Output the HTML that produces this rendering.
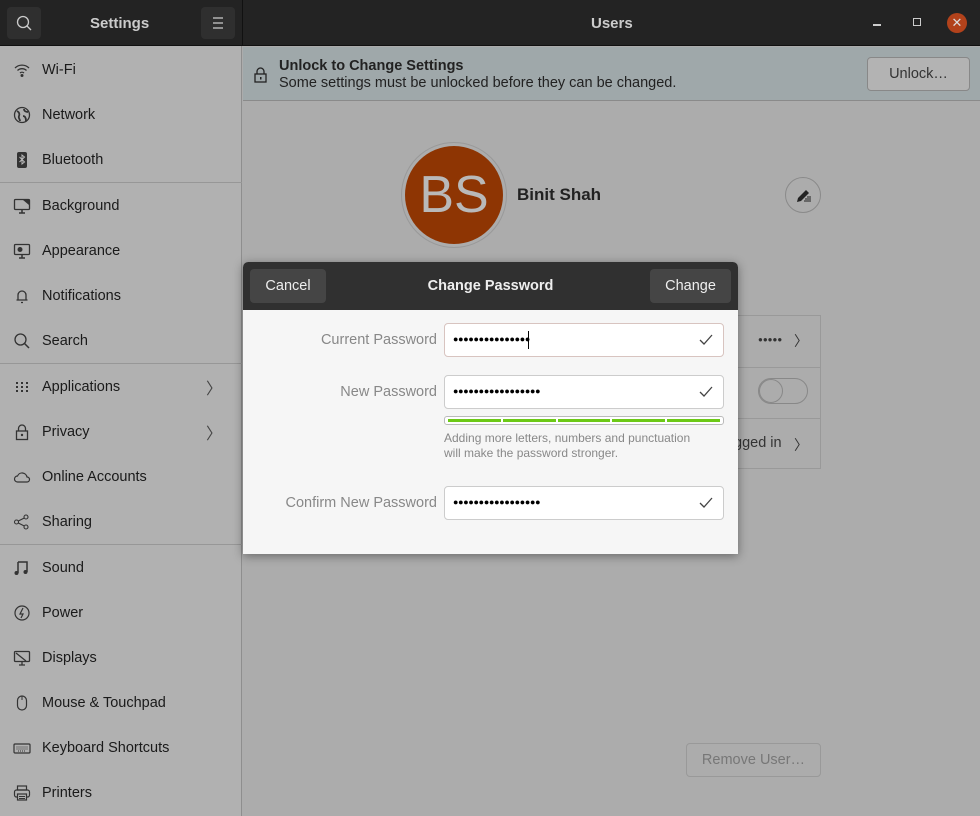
<!DOCTYPE html>
<html><head><style>
*{box-sizing:border-box;margin:0;padding:0}
body{width:980px;height:816px;overflow:hidden;font-family:"Liberation Sans",sans-serif;background:#acacac;position:relative;font-size:14px;color:#1a1a1a}
.hdr{position:absolute;left:0;top:0;width:980px;height:46px;background:#232323;border-bottom:1px solid #111}
.hbtn{position:absolute;top:7px;width:34px;height:32px;background:#2f2f2f;border-radius:4px}
.side{position:absolute;left:0;top:46px;width:242px;height:770px;background:#b1b1b1;border-right:1px solid #8e8e8e}
.it{position:absolute;left:0;width:242px;height:45px;display:flex;align-items:center}
.it svg{position:absolute;left:13px}
.it span{position:absolute;left:42px;font-size:14.5px;top:15px}
.sep{position:absolute;left:0;width:242px;height:1px;background:#979797}
.chev{position:absolute;right:20px;font-size:16px;color:#444}
.banner{position:absolute;left:243px;top:47px;width:737px;height:54px;background:#9fa8aa;border-bottom:1px solid #8a8a8a}
.dlg{position:absolute;left:243px;top:262px;width:495px;height:292px;background:#f6f6f6;box-shadow:0 2px 10px rgba(0,0,0,.4);border-radius:5px 5px 0 0;overflow:hidden}
.dh{height:48px;background:#303030;position:relative}
.db{position:absolute;top:7px;height:34px;background:#454545;border-radius:4px;color:#eee;font-size:14.5px;display:flex;align-items:center;justify-content:center}
.lbl{position:absolute;right:301px;color:#888;font-size:14.5px}
.in{position:absolute;left:201px;width:280px;height:34px;background:#fff;border:1px solid #ccc;border-radius:4px}
.in .dots{position:absolute;left:8px;top:10px;font-size:9px;letter-spacing:-0.3px;color:#000}
.in svg{position:absolute;right:10px;top:10px}
</style></head><body>
<div class="hdr">
 <div class="hbtn" style="left:7px"><svg width="34" height="32"><circle cx="16" cy="15" r="5.5" stroke="#ccc" stroke-width="1.3" fill="none"/><path d="M20 19l4 4" stroke="#ccc" stroke-width="1.3"/></svg></div>
 <div style="position:absolute;left:90px;top:15px;color:#ccc;font-weight:bold;font-size:15px">Settings</div>
 <div class="hbtn" style="left:201px"><svg width="34" height="32"><path d="M12 11h10M12 16h10M12 21h10" stroke="#ccc" stroke-width="1.2"/></svg></div>
 <div style="position:absolute;left:242px;top:0;width:1px;height:46px;background:#111"></div>
 <div style="position:absolute;left:591px;top:15px;color:#ccc;font-weight:bold;font-size:15px">Users</div>
 <div style="position:absolute;left:873px;top:24px;width:8px;height:1.5px;background:#ccc"></div>
 <div style="position:absolute;left:913px;top:18px;width:8px;height:8px;border:1.3px solid #ccc"></div>
 <div style="position:absolute;left:947px;top:13px;width:20px;height:20px;border-radius:50%;background:#b2421b;color:#ddd;text-align:center;line-height:20px;font-size:13px">✕</div>
</div>
<div class="side">
 <div class="it" style="top:1px"><svg width="18" height="18"><path d="M2 7a10 10 0 0 1 14 0M4.5 9.5a6.5 6.5 0 0 1 9 0M7 12a3 3 0 0 1 4 0" stroke="#333" stroke-width="1.3" fill="none"/><circle cx="9" cy="14.5" r="1.5" fill="#333"/></svg><span>Wi-Fi</span></div>
 <div class="it" style="top:46px"><svg width="18" height="18"><circle cx="9" cy="9" r="7.5" stroke="#333" stroke-width="1.3" fill="none"/><path d="M4 5c2 1 3 3 2 5s1 3 1 5M11 3c0 2 2 3 4 3M10 10c2 0 3 2 3 5" stroke="#333" stroke-width="1.8" fill="none"/></svg><span>Network</span></div>
 <div class="it" style="top:91px"><svg width="18" height="18"><rect x="4" y="1" width="10" height="16" rx="2" fill="#333"/><path d="M6.5 6l5 5-2.5 2V4l2.5 2-5 5" stroke="#bbb" stroke-width="1" fill="none"/></svg><span>Bluetooth</span></div>
 <div class="sep" style="top:136px"></div>
 <div class="it" style="top:137px"><svg width="18" height="18"><rect x="1.5" y="2.5" width="15" height="10" rx="1" stroke="#333" stroke-width="1.3" fill="none"/><path d="M10 3h6v5z" fill="#333"/><path d="M6 16h6M9 13v3" stroke="#333" stroke-width="1.5"/></svg><span>Background</span></div>
 <div class="it" style="top:182px"><svg width="18" height="18"><rect x="1.5" y="2.5" width="15" height="10" rx="1" stroke="#333" stroke-width="1.3" fill="none"/><circle cx="7" cy="7.5" r="2.5" fill="#333"/><path d="M6 16h6M9 13v3" stroke="#333" stroke-width="1.5"/></svg><span>Appearance</span></div>
 <div class="it" style="top:227px"><svg width="18" height="18"><path d="M5 13V8a4 4 0 0 1 8 0v5h1.5H3.5zM8 15.5h2" stroke="#333" stroke-width="1.3" fill="none"/></svg><span>Notifications</span></div>
 <div class="it" style="top:272px"><svg width="18" height="18"><circle cx="7.5" cy="7.5" r="5.5" stroke="#333" stroke-width="1.3" fill="none"/><path d="M11.5 11.5l4.5 4.5" stroke="#333" stroke-width="1.5"/></svg><span>Search</span></div>
 <div class="sep" style="top:317px"></div>
 <div class="it" style="top:318px"><svg width="18" height="18" fill="#333"><rect x="3" y="4" width="2" height="2"/><rect x="8" y="4" width="2" height="2"/><rect x="13" y="4" width="2" height="2"/><rect x="3" y="8" width="2" height="2"/><rect x="8" y="8" width="2" height="2"/><rect x="13" y="8" width="2" height="2"/><rect x="3" y="12" width="2" height="2"/><rect x="8" y="12" width="2" height="2"/><rect x="13" y="12" width="2" height="2"/></svg><span>Applications</span><div class="chev">〉</div></div>
 <div class="it" style="top:363px"><svg width="18" height="18"><rect x="3.5" y="8" width="11" height="8.5" stroke="#333" stroke-width="1.3" fill="none"/><path d="M5.5 8V5.5a3.5 3.5 0 0 1 7 0V8" stroke="#333" stroke-width="1.3" fill="none"/><circle cx="9" cy="12" r="1.2" fill="#333"/></svg><span>Privacy</span><div class="chev">〉</div></div>
 <div class="it" style="top:408px"><svg width="18" height="18"><path d="M4.5 14a3 3 0 0 1 0-6 5 5 0 0 1 9.5 1 2.5 2.5 0 0 1 0 5z" stroke="#333" stroke-width="1.2" fill="none"/></svg><span>Online Accounts</span></div>
 <div class="it" style="top:453px"><svg width="18" height="18"><circle cx="3.5" cy="9" r="2" stroke="#333" stroke-width="1.1" fill="none"/><circle cx="13" cy="4" r="2" stroke="#333" stroke-width="1.1" fill="none"/><circle cx="13" cy="14" r="2" stroke="#333" stroke-width="1.1" fill="none"/><path d="M5.3 8l6-3M5.3 10l6 3" stroke="#333" stroke-width="1.1"/></svg><span>Sharing</span></div>
 <div class="sep" style="top:498px"></div>
 <div class="it" style="top:499px"><svg width="18" height="18"><path d="M5 3h9v10M5 3v11" stroke="#333" stroke-width="1.5" fill="none"/><circle cx="3.5" cy="14" r="2" fill="#333"/><circle cx="12.5" cy="13" r="2" fill="#333"/></svg><span>Sound</span></div>
 <div class="it" style="top:544px"><svg width="18" height="18"><circle cx="9" cy="9" r="7" stroke="#333" stroke-width="1.2" fill="none"/><path d="M10 4L7 10h3l-2 4" stroke="#333" stroke-width="1.2" fill="none"/></svg><span>Power</span></div>
 <div class="it" style="top:589px"><svg width="18" height="18"><rect x="1.5" y="2.5" width="15" height="10" rx="1" stroke="#333" stroke-width="1.3" fill="none"/><path d="M3 4l10 8M6 16h6M9 13v3" stroke="#333" stroke-width="1.3"/></svg><span>Displays</span></div>
 <div class="it" style="top:634px"><svg width="18" height="18"><rect x="4.5" y="2" width="9" height="14" rx="4.5" stroke="#333" stroke-width="1.2" fill="none"/><path d="M9 2v4" stroke="#333"/></svg><span>Mouse &amp; Touchpad</span></div>
 <div class="it" style="top:679px"><svg width="18" height="18"><rect x="1" y="5" width="16" height="9" rx="1" stroke="#333" stroke-width="1.2" fill="none"/><path d="M3.5 8h11M3.5 10h11M5 12h8" stroke="#333" stroke-dasharray="1 1"/></svg><span>Keyboard Shortcuts</span></div>
 <div class="it" style="top:724px"><svg width="18" height="18"><rect x="4.5" y="2" width="9" height="4" stroke="#333" stroke-width="1.2" fill="none"/><rect x="1.5" y="6" width="15" height="7" rx="2" stroke="#333" stroke-width="1.2" fill="none"/><rect x="4.5" y="10" width="9" height="6" stroke="#333" stroke-width="1.2" fill="#b1b1b1"/><path d="M6 12.5h6M6 14.5h6" stroke="#333"/></svg><span>Printers</span></div>
</div>
<div class="banner">
 <svg width="14" height="16" style="position:absolute;left:11px;top:20px"><rect x="1" y="7" width="11" height="8" stroke="#222" stroke-width="1.3" fill="none"/><path d="M3 7V4.5a3.5 3.5 0 0 1 7 0V7" stroke="#222" stroke-width="1.3" fill="none"/><rect x="6" y="10" width="1.5" height="2.5" fill="#222"/></svg>
 <div style="position:absolute;left:36px;top:11px;font-weight:bold;font-size:14.5px;color:#222">Unlock to Change Settings</div>
 <div style="position:absolute;left:36px;top:28px;font-size:14.5px;color:#222">Some settings must be unlocked before they can be changed.</div>
 <div style="position:absolute;left:624px;top:10px;width:103px;height:34px;border:1px solid #888;border-radius:4px;background:#b3b3b3;text-align:center;line-height:32px;font-size:14.5px;color:#333">Unlock…</div>
</div>
<div style="position:absolute;left:401px;top:142px;width:106px;height:106px;border-radius:50%;border:1px solid #999;padding:3px"><div style="width:98px;height:98px;border-radius:50%;background:#8e3503;color:#b9b9b9;font-size:52px;text-align:center;line-height:98px">BS</div></div>
<div style="position:absolute;left:517px;top:185px;font-weight:bold;font-size:17px;color:#222">Binit Shah</div>
<div style="position:absolute;left:785px;top:177px;width:36px;height:36px;border-radius:50%;border:1px solid #8a8a8a"><svg width="36" height="36"><path d="M11 24l1-4 8-8 3 3-8 8z" fill="#222"/><path d="M19 21h6M18 23h7M21 19h4" stroke="#222" stroke-width="1"/></svg></div>
<div style="position:absolute;left:738px;top:315px;width:83px;height:154px;border:1px solid #999;border-left:none">
 <div style="position:absolute;left:0;top:51px;width:82px;height:1px;background:#999"></div>
 <div style="position:absolute;left:0;top:102px;width:82px;height:1px;background:#999"></div>
 <div style="position:absolute;left:20px;top:19px;font-size:8px;color:#333">●●●●●</div>
 <div style="position:absolute;left:56px;top:15px;color:#333">〉</div>
 <div style="position:absolute;left:20px;top:62px;width:50px;height:26px;border-radius:13px;border:1px solid #888"><div style="width:24px;height:24px;border-radius:50%;border:1px solid #888"></div></div>
 <div style="position:absolute;left:-4px;top:119px;font-size:14.5px;color:#333">gged in</div>
 <div style="position:absolute;left:56px;top:119px;color:#333">〉</div>
</div>
<div style="position:absolute;left:686px;top:743px;width:135px;height:34px;border:1px solid #999;border-radius:4px;text-align:center;line-height:32px;color:#777;font-size:14.5px">Remove User…</div>
<div class="dlg">
 <div class="dh">
  <div class="db" style="left:7px;width:76px">Cancel</div>
  <div style="position:absolute;left:0;width:495px;top:16px;text-align:center;color:#eee;font-weight:bold;font-size:14.5px">Change Password</div>
  <div class="db" style="left:407px;width:81px">Change</div>
 </div>
 <div class="lbl" style="top:70px">Current Password</div>
 <div class="in" style="top:61px;border-color:#d8c4c0"><div class="dots">●●●●●●●●●●●●●●●</div><div style="position:absolute;left:83px;top:7px;width:1px;height:18px;background:#000"></div><svg width="14" height="12"><path d="M1 6l4 4 8-9" stroke="#444" stroke-width="1.3" fill="none"/></svg></div>
 <div class="lbl" style="top:122px">New Password</div>
 <div class="in" style="top:113px"><div class="dots">●●●●●●●●●●●●●●●●●</div><svg width="14" height="12"><path d="M1 6l4 4 8-9" stroke="#444" stroke-width="1.3" fill="none"/></svg></div>
 <div style="position:absolute;left:201px;top:154px;width:280px;height:9px;border:1px solid #bbb;border-radius:3px;background:#fff;padding:2px 3px;display:flex;gap:2px"><i style="flex:1;background:#6cc916"></i><i style="flex:1;background:#6cc916"></i><i style="flex:1;background:#6cc916"></i><i style="flex:1;background:#6cc916"></i><i style="flex:1;background:#6cc916"></i></div>
 <div style="position:absolute;left:201px;top:169px;font-size:12px;color:#888;line-height:15px">Adding more letters, numbers and punctuation<br>will make the password stronger.</div>
 <div class="lbl" style="top:233px">Confirm New Password</div>
 <div class="in" style="top:224px"><div class="dots">●●●●●●●●●●●●●●●●●</div><svg width="14" height="12"><path d="M1 6l4 4 8-9" stroke="#444" stroke-width="1.3" fill="none"/></svg></div>
</div>
</body></html>
